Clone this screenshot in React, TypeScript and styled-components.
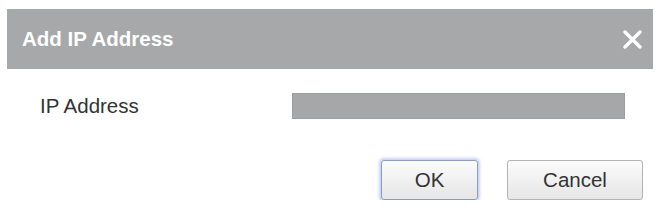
import React from 'react';
import styled, {createGlobalStyle} from "styled-components";

const GlobalStyle = createGlobalStyle`
  html, body {
    margin: 0;
    padding: 0;
    background: #ffffff;
    font-family: "Liberation Sans", Arial, sans-serif;
  }
`

export default function App() {
    return (
        <>
            <GlobalStyle/>
            <Dialog>
                <Header>
                    <Title>Add IP Address</Title>
                    <CloseButton aria-label="close">
                        <svg width="19" height="19" viewBox="0 0 19 19">
                            <path d="M2 2 L17 17 M17 2 L2 17" stroke="#ffffff" strokeWidth="3.4" strokeLinecap="round"/>
                        </svg>
                    </CloseButton>
                </Header>
                <Row>
                    <Label>IP Address</Label>
                    <Input/>
                </Row>
                <Footer>
                    <Button primary>OK</Button>
                    <Button $wide>Cancel</Button>
                </Footer>
            </Dialog>
        </>
    );
}

const Dialog = styled.div`
  width: 646px;
  margin: 9px 0 0 7px;
`

const Header = styled.div`
  height: 60px;
  background-color: #a7a8aa;
  display: flex;
  align-items: center;
  justify-content: space-between;
  padding: 0 11px 0 15px;
  box-sizing: border-box;
`

const Title = styled.h3`
  margin: 0;
  color: #ffffff;
  font-size: 20.5px;
  font-weight: 700;
`

const CloseButton = styled.button`
  border: none;
  background: transparent;
  padding: 0;
  width: 19px;
  height: 19px;
  display: flex;
`

const Row = styled.div`
  display: flex;
  align-items: center;
  margin-top: 24px;
  padding-left: 33px;
  height: 26px;
`

const Label = styled.span`
  width: 252px;
  font-size: 20.5px;
  color: #333333;
`

const Input = styled.div`
  width: 333px;
  height: 26px;
  box-sizing: border-box;
  background-color: #a6a7a9;
  border: 1px solid #9c9d9f;
`

const Footer = styled.div`
  display: flex;
  justify-content: flex-end;
  gap: 29px;
  margin-top: 41px;
  padding-right: 10px;
`

const Button = styled.button<{primary?: boolean; $wide?: boolean}>`
  width: ${p => p.$wide ? '136px' : '97px'};
  height: 40px;
  box-sizing: border-box;
  font-family: "Liberation Sans", Arial, sans-serif;
  font-size: 20.5px;
  color: #333333;
  border-radius: 3px;
  border: 1px solid ${p => p.primary ? '#8d9cbc' : '#b4b4b4'};
  background: linear-gradient(#fbfbfb, #e6e6e6);
  box-shadow: ${p => p.primary ? '0 0 3px 2px rgba(150, 175, 225, 0.55)' : '0 1px 1px rgba(0,0,0,0.08)'};
`
